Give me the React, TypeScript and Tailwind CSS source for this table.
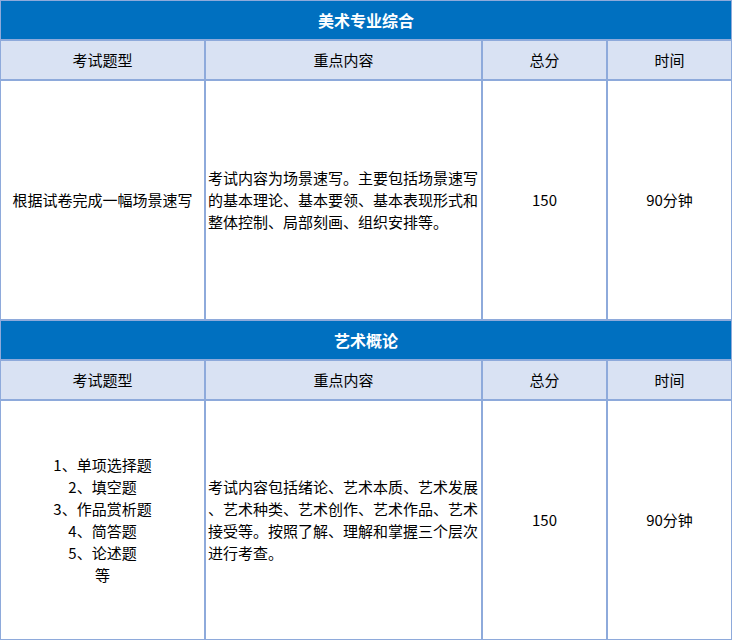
const font = { fontFamily: '"Noto Sans CJK SC", "Microsoft YaHei", sans-serif' };

type Section = {
  title: string;
  type: string[];
  content: string[];
  score: string;
  time: string;
};

const sections: Section[] = [
  {
    title: '美术专业综合',
    type: ['根据试卷完成一幅场景速写'],
    content: [
      '考试内容为场景速写。主要包括场景速写',
      '的基本理论、基本要领、基本表现形式和',
      '整体控制、局部刻画、组织安排等。',
    ],
    score: '150',
    time: '90分钟',
  },
  {
    title: '艺术概论',
    type: ['1、单项选择题', '2、填空题', '3、作品赏析题', '4、简答题', '5、论述题', '等'],
    content: [
      '考试内容包括绪论、艺术本质、艺术发展',
      '、艺术种类、艺术创作、艺术作品、艺术',
      '接受等。按照了解、理解和掌握三个层次',
      '进行考查。',
    ],
    score: '150',
    time: '90分钟',
  },
];

const headers = ['考试题型', '重点内容', '总分', '时间'];

export default function App() {
  return (
    <div className="bg-white w-[733px] h-[641px] text-black" style={font}>
      <div className="grid grid-cols-[205px_277px_125px_125px] text-[15px] leading-[22px]">
        {sections.map((s) => (
          <div key={s.title} className="contents">
            <div className="col-span-4 h-10 border border-[#8eaadb] bg-[#0070c0] text-white font-bold text-[16px] flex items-center justify-center">
              {s.title}
            </div>
            {headers.map((h) => (
              <div
                key={h}
                className="h-10 border border-[#8eaadb] bg-[#d9e2f3] flex items-center justify-center"
              >
                {h}
              </div>
            ))}
            <div className="h-[240px] border border-[#8eaadb] flex flex-col items-center justify-center">
              {s.type.map((t) => (
                <div key={t} className="whitespace-nowrap">{t}</div>
              ))}
            </div>
            <div className="h-[240px] border border-[#8eaadb] flex flex-col justify-center pl-[2px]">
              {s.content.map((c) => (
                <div key={c} className="whitespace-nowrap">{c}</div>
              ))}
            </div>
            <div className="h-[240px] border border-[#8eaadb] flex items-center justify-center">
              {s.score}
            </div>
            <div className="h-[240px] border border-[#8eaadb] flex items-center justify-center">
              {s.time}
            </div>
          </div>
        ))}
      </div>
    </div>
  );
}
